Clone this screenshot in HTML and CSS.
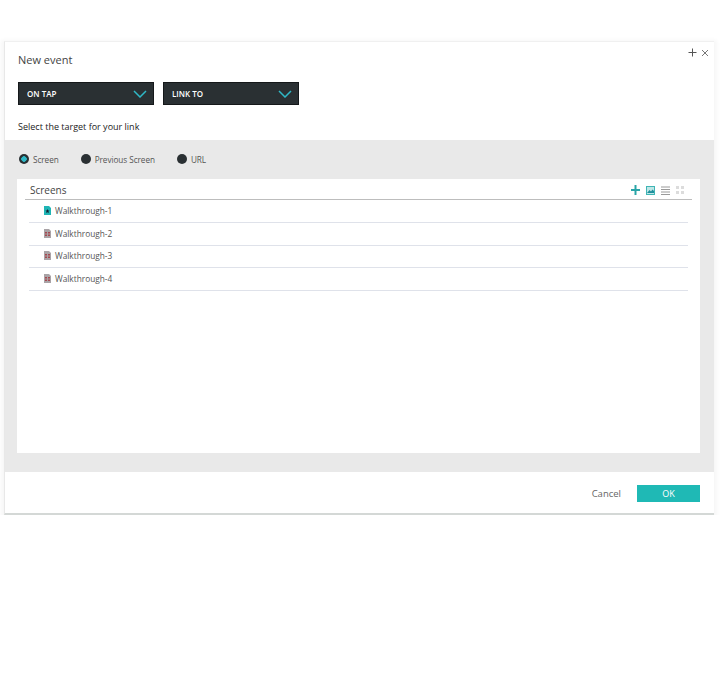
FILE: index.html
```html
<!DOCTYPE html>
<html lang="en">
<head>
    <meta charset="UTF-8">
    <title>New event</title>
    <link rel="stylesheet" href="styles.css">
</head>
<body>
    <div class="dialog">
        <div class="window-actions">
            <svg width="9" height="9" viewBox="0 0 9 9"><path d="M4.5 0.5v8M0.5 4.5h8" stroke="#555" fill="none"/></svg>
            <svg width="8" height="8" viewBox="0 0 8 8"><path d="M1 1l6 6M7 1l-6 6" stroke="#777" fill="none"/></svg>
        </div>
        <h1>New event</h1>

        <div class="selects">
            <div class="select">
                <span>ON TAP</span>
                <svg width="14" height="8" viewBox="0 0 14 8"><path d="M1 1l6 6 6-6" stroke="#2fb8c6" stroke-width="1.5" fill="none"/></svg>
            </div>
            <div class="select">
                <span>LINK TO</span>
                <svg width="14" height="8" viewBox="0 0 14 8"><path d="M1 1l6 6 6-6" stroke="#2fb8c6" stroke-width="1.5" fill="none"/></svg>
            </div>
        </div>

        <p class="hint">Select the target for your link</p>

        <div class="target">
            <div class="radios">
                <div class="radio-item"><span class="radio checked"></span>Screen</div>
                <div class="radio-item"><span class="radio"></span>Previous Screen</div>
                <div class="radio-item"><span class="radio"></span>URL</div>
            </div>

            <div class="panel">
                <div class="panel-head">
                    <span>Screens</span>
                    <div class="tools">
                        <svg width="9" height="10" viewBox="0 0 9 10"><path d="M4.500 0v10M0 5h9" stroke="#2aa5a8" stroke-width="2" fill="none"/></svg>
                        <svg width="9" height="9" viewBox="0 0 9 9"><rect x="0.500" y="0.500" width="8" height="8" fill="#bfe6e6" stroke="#3fb5b5"/><path d="M1 7l2.500-3 1.500 1.500 1.500-2 1.500 1.500V7z" fill="#1f8f9c"/></svg>
                        <svg width="9" height="9" viewBox="0 0 9 9"><path d="M0 1h9M0 3.500h9M0 6h9M0 8.500h9" stroke="#9a9a9a" fill="none"/></svg>
                        <svg width="8" height="8" viewBox="0 0 8 8"><path d="M0 0h3v3H0zM5 0h3v3H5zM0 5h3v3H0zM5 5h3v3H5z" fill="#dcdcdc"/></svg>
                    </div>
                </div>
                <ul class="screens">
                    <li>
                        <svg width="7" height="9" viewBox="0 0 7 9"><path d="M0 0h5l2 2v7H0z" fill="#1fb5b5"/><path d="M3.500 3l.7 1.400 1.300.2-1 1 .3 1.400-1.300-.7-1.300.7.3-1.400-1-1 1.300-.2z" fill="#123"/></svg>
                        Walkthrough-1
                    </li>
                    <li>
                        <svg width="7" height="9" viewBox="0 0 7 9"><path d="M0 0h5l2 2v7H0z" fill="#a9a3a6"/><path d="M1 3h2v1.500H1zM4 3h2v1.500H4zM1 5.500h2V7H1zM4 5.500h2V7H4z" fill="#a5484f"/></svg>
                        Walkthrough-2
                    </li>
                    <li>
                        <svg width="7" height="9" viewBox="0 0 7 9"><path d="M0 0h5l2 2v7H0z" fill="#a9a3a6"/><path d="M1 3h2v1.500H1zM4 3h2v1.500H4zM1 5.500h2V7H1zM4 5.500h2V7H4z" fill="#a5484f"/></svg>
                        Walkthrough-3
                    </li>
                    <li>
                        <svg width="7" height="9" viewBox="0 0 7 9"><path d="M0 0h5l2 2v7H0z" fill="#a9a3a6"/><path d="M1 3h2v1.500H1zM4 3h2v1.500H4zM1 5.500h2V7H1zM4 5.500h2V7H4z" fill="#a5484f"/></svg>
                        Walkthrough-4
                    </li>
                </ul>
            </div>
        </div>

        <div class="footer">
            <span class="cancel">Cancel</span>
            <button class="ok">OK</button>
        </div>
    </div>
</body>
</html>
```

FILE: styles.css
```css
body {
    margin: 0;
    padding: 41px 0 0 4px;
    background: white;
    font-family: "Open Sans", sans-serif;
    color: #333;
}
.dialog {
    position: relative;
    width: 709px;
    height: 471px;
    background: white;
    border-left: 1px solid #e8e8e8;
    border-top: 1px solid #f0f0f0;
    border-bottom: 2px solid #d4d8d6;
    box-shadow: 0 2px 4px 3px rgba(0,0,0,0.035);
}
.window-actions {
    position: absolute;
    top: 6px;
    right: 5px;
    display: flex;
    align-items: center;
    gap: 4px;
}
h1 {
    margin: 0;
    padding: 9px 0 0 13px;
    height: 30px;
    box-sizing: border-box;
    font-size: 11px;
    line-height: 17px;
    font-weight: 400;
    color: #444;
}
.selects {
    display: flex;
    gap: 9px;
    margin: 10px 0 0 13px;
}
.select {
    width: 136px;
    height: 23px;
    box-sizing: border-box;
    padding: 0 6px 0 8px;
    display: flex;
    justify-content: space-between;
    align-items: center;
    background: #2a3033;
    border: 1px solid #15181a;
    color: white;
    font-size: 8px;
    font-weight: 600;
}
.hint {
    margin: 15px 0 0 13px;
    height: 20px;
    font-size: 9px;
    line-height: 13px;
    color: #222;
}
.target {
    height: 332px;
    box-sizing: border-box;
    padding: 0 14px 19px 12px;
    background: #e9e9e9;
    display: flex;
    flex-direction: column;
}
.radios {
    height: 38px;
    margin-bottom: 1px;
    display: flex;
    align-items: center;
    padding-left: 2px;
    gap: 22px;
    font-size: 8.200px;
    letter-spacing: -0.05px;
    color: #555;
}
.radio-item {
    display: flex;
    align-items: center;
    gap: 4px;
}
.radio {
    width: 10px;
    height: 10px;
    border-radius: 50%;
    background: #2a3033;
}
.radio.checked {
    background: radial-gradient(circle, #2fb8c6 0 2.500px, #2a3033 3px);
}
.panel {
    flex: 1;
    background: white;
    padding: 0 8px 0 8px;
}
.panel-head {
    height: 21px;
    box-sizing: border-box;
    border-bottom: 1px solid #bdbdbd;
    padding: 2px 8px 0 5px;
    display: flex;
    justify-content: space-between;
    align-items: center;
    font-size: 10px;
    color: #444;
}
.tools {
    display: flex;
    align-items: center;
    gap: 6px;
}
.screens {
    list-style: none;
    margin: 0 4px;
    padding: 0;
}
.screens li {
    height: 22.750px;
    box-sizing: border-box;
    border-bottom: 1px solid #dfe2ea;
    padding: 0 0 1px 15px;
    display: flex;
    align-items: center;
    gap: 4px;
    font-size: 8.300px;
    color: #555;
}
.footer {
    height: 41px;
    box-sizing: border-box;
    padding: 2px 14px 0 0;
    display: flex;
    align-items: center;
    justify-content: flex-end;
    gap: 16px;
}
.cancel {
    font-size: 9.500px;
    color: #666;
}
.ok {
    width: 63px;
    height: 17px;
    padding: 0;
    border: none;
    background: #1fb9b5;
    color: white;
    font-family: inherit;
    font-size: 9px;
}
```
